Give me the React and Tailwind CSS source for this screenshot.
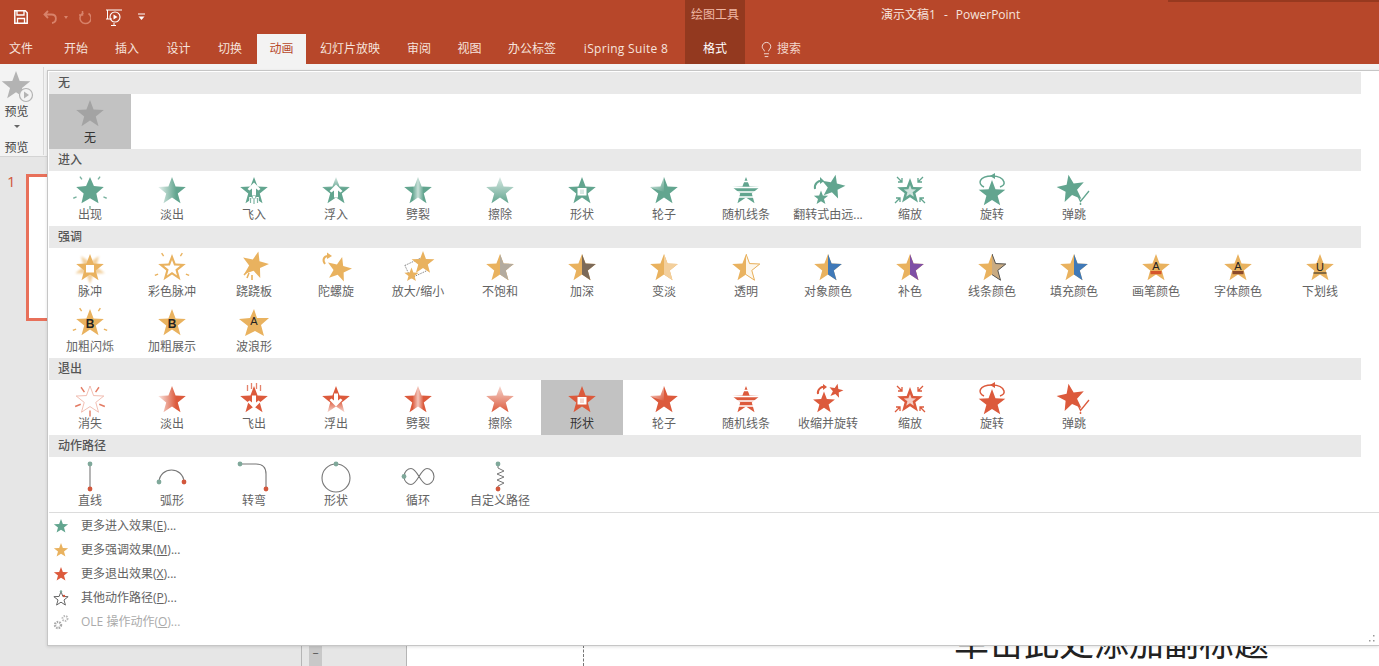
import React, { useId } from "react";
import { Lightbulb } from "lucide-react";

const GREEN = "#62a58f";
const GOLD = "#e9b25f";
const RED = "#dc5a3c";

function pts(cx, cy, r, rot = 0, ratio = 0.42) {
  const out = [];
  for (let i = 0; i < 10; i++) {
    const rad = i % 2 === 0 ? r : r * ratio;
    const a = ((-90 + rot + i * 36) * Math.PI) / 180;
    out.push(`${(cx + rad * Math.cos(a)).toFixed(2)},${(cy + rad * Math.sin(a)).toFixed(2)}`);
  }
  return out.join(" ");
}

function Rays({ angles, r1, r2, c, w = 1.4, cx = 16, cy = 17.5, op = 1 }) {
  return angles.map((d, i) => {
    const a = ((d - 90) * Math.PI) / 180;
    return (
      <line key={i} x1={cx + r1 * Math.cos(a)} y1={cy + r1 * Math.sin(a)} x2={cx + r2 * Math.cos(a)} y2={cy + r2 * Math.sin(a)} stroke={c} strokeWidth={w} opacity={op} />
    );
  });
}

function Half({ id, c, other, stroke }) {
  return (
    <>
      <defs>
        <clipPath id={id}>
          <rect x="16" y="0" width="16" height="32" />
        </clipPath>
      </defs>
      <polygon points={pts(16, 17.5, 14.5)} fill={GOLD} />
      <polygon points={pts(16, 17.5, 14.5)} fill={other} stroke={stroke} strokeWidth={stroke ? 1 : 0} clipPath={`url(#${id})`} />
    </>
  );
}

function Letter({ t, y = 21, bold, size = 11 }) {
  return (
    <text x="16" y={y} textAnchor="middle" fontSize={size} fontWeight={bold ? 700 : 400} fontFamily="'Liberation Sans',sans-serif" fill="#222">
      {t}
    </text>
  );
}

const UP = "M16 8.500l-6.500 6.500 2 1.500L14 14.500v7h4v-7l2.500 2 2-1.500z";
const DOWN = "M16 25.500l-6.500-6.500 2-1.500 2.500 2v-7h4v7l2.500-2 2 1.500z";

function Icon({ v, c = GREEN }) {
  const id = useId().replace(/[^a-zA-Z0-9]/g, "");
  const S = pts(16, 17.5, 14.5);
  const star = <polygon points={S} fill={c} />;
  const grad = (x1, y1, x2, y2, o1, o2, mid = 1) => (
    <defs>
      <linearGradient id={id} x1={x1} y1={y1} x2={x2} y2={y2}>
        <stop offset="0" stopColor={c} stopOpacity={o1} />
        <stop offset={mid} stopColor={c} stopOpacity={o2} />
      </linearGradient>
    </defs>
  );
  const gs = <polygon points={S} fill={`url(#${id})`} />;
  let body = null;
  switch (v) {
    case "none":
      body = <polygon points={S} fill="#a3a3a3" />;
      break;
    case "appear":
      body = (
        <>
          <polygon points={pts(16, 17.5, 14.5, 0, 0.46)} fill={c} />
          <Rays angles={[-34, 34, -112, 112, 180]} r1={14.5} r2={18} c={c} op={0.85} />
        </>
      );
      break;
    case "fade":
      body = (
        <>
          {grad(0, 0, 1, 0, 0.15, 1, 0.65)}
          {gs}
        </>
      );
      break;
    case "fly":
    case "flyOut":
      body = (
        <>
          {star}
          {v === "fly" ? (
            <>
              <path d={UP} fill="#fff" />
              <path d="M12.500 23v7M16 22v8M19.500 23v7" stroke="#fff" strokeWidth="2.600" />
              <path d="M12.500 24v5M16 24v6M19.500 24v5" stroke={c} strokeWidth="1.200" opacity=".8" />
            </>
          ) : (
            <>
              <path d={DOWN} fill="#fff" />
              <path d="M9.500 2v6M13.500 0v6M18.500 0v6M22.500 2v6" stroke={c} strokeWidth="1.300" opacity=".75" />
            </>
          )}
        </>
      );
      break;
    case "float":
    case "floatOut":
      body = (
        <>
          {v === "float" ? grad(0, 0, 0, 1, 0.25, 1, 0.45) : grad(0, 1, 0, 0, 0.25, 1, 0.45)}
          {gs}
          <path d={v === "float" ? UP : DOWN} fill="#fff" transform={v === "float" ? "translate(0,2)" : "translate(0,-2)"} />
        </>
      );
      break;
    case "split":
      body = (
        <>
          <defs>
            <linearGradient id={id} x1="0" y1="0" x2="1" y2="0">
              <stop offset="0.3" stopColor={c} />
              <stop offset="0.5" stopColor={c} stopOpacity=".35" />
              <stop offset="0.7" stopColor={c} />
            </linearGradient>
          </defs>
          {gs}
        </>
      );
      break;
    case "wipe":
      body = (
        <>
          {grad(0, 0, 0, 1, 0.25, 1)}
          {gs}
        </>
      );
      break;
    case "shape":
      body = (
        <>
          {star}
          <rect x="11.500" y="14" width="9" height="7.500" fill="#fff" />
          <rect x="14" y="15.500" width="4" height="4.500" fill={c} opacity=".25" />
        </>
      );
      break;
    case "wheel":
      body = (
        <>
          {star}
          <defs>
            <linearGradient id={id} x1="0" y1="0" x2="1" y2="1">
              <stop offset="0" stopColor="#fff" stopOpacity=".95" />
              <stop offset="1" stopColor="#fff" stopOpacity="0" />
            </linearGradient>
          </defs>
          <polygon points="16,3 16,18 1,13 10,12" fill={`url(#${id})`} />
        </>
      );
      break;
    case "bars":
      body = (
        <>
          {star}
          <path d="M0 7.500h32M0 13.500h32M0 18h32M0 23h32" stroke="#fff" strokeWidth="1.600" />
        </>
      );
      break;
    case "flip":
      body = (
        <>
          <polygon points={pts(21, 13, 12.500, 12)} fill={c} />
          <polygon points={pts(9, 24, 7.500)} fill={c} />
          <path d="M3 15c-1-5 3-9 8-8" fill="none" stroke={c} strokeWidth="2" />
          <path d="M8 3l4 4-4 3z" fill={c} />
        </>
      );
      break;
    case "shrink":
      body = (
        <>
          <polygon points={pts(12, 20, 11.500)} fill={c} />
          <polygon points={pts(24, 8, 7.500, 12)} fill={c} />
          <path d="M6 11c-1-4 3-8 7-7" fill="none" stroke={c} strokeWidth="2" />
          <path d="M11 1l4 3-4 3z" fill={c} />
        </>
      );
      break;
    case "zoom":
      body = (
        <>
          <polygon points={pts(16, 17.500, 13.500)} fill={c} />
          <polygon points={pts(16, 17.500, 6.500)} fill="#fff" opacity=".7" />
          <path d="M3 3l5 5M8 4v4H4M29 3l-5 5M24 4v4h4M1 29l5-5M6 28v-4H2M31 29l-5-5M26 28v-4h4" fill="none" stroke={c} strokeWidth="1.300" />
        </>
      );
      break;
    case "swivel":
      body = (
        <>
          <path d="M8 13C1 10 3 2 16 2c7 0 11 3 12 6 .5 2-1 4-4 5" fill="none" stroke={c} strokeWidth="1.500" />
          <polygon points={pts(16, 20, 14)} fill={c} />
          <path d="M19-1l-5 3 5 3z" fill={c} />
        </>
      );
      break;
    case "bounce":
      body = (
        <>
          <polygon points={pts(13, 15, 14.500, -10)} fill={c} />
          <path d="M19 20l3.500 7.500L31 17" fill="none" stroke={c} strokeWidth="1.300" />
          <circle cx="22.500" cy="30" r=".9" fill={c} />
        </>
      );
      break;
    case "vanish":
      body = (
        <>
          <polygon points={S} fill="#fff" stroke={c} strokeWidth=".6" opacity=".65" />
          <Rays angles={[-34, 34, -112, 112, 180]} r1={16} r2={10} c={c} op={0.8} />
        </>
      );
      break;
    case "pulse":
      body = (
        <>
          <defs>
            <filter id={id} x="-30%" y="-30%" width="160%" height="160%">
              <feGaussianBlur stdDeviation="1.300" />
            </filter>
          </defs>
          <polygon points={pts(16, 17.500, 15.500, 36)} fill={c} opacity=".6" filter={`url(#${id})`} />
          {star}
          <rect x="12" y="14" width="8" height="7.500" fill="#fff" />
        </>
      );
      break;
    case "colorPulse":
      body = (
        <>
          {star}
          <polygon points={pts(16, 17.500, 8.500)} fill="#fff" />
          <Rays angles={[-34, 34, -112, 112]} r1={15} r2={18.500} c={c} />
        </>
      );
      break;
    case "teeter":
      body = (
        <>
          <polygon points={pts(17, 14, 14, 14)} fill={c} />
          <path d="M9 27l2-5M14 29l0-5M6 24l3-3" stroke={c} strokeWidth="1.600" />
        </>
      );
      break;
    case "spin":
      body = (
        <>
          <polygon points={pts(19, 18.500, 13, 14)} fill={c} />
          <path d="M5 13c-3-4-1-8 3-8" fill="none" stroke={c} strokeWidth="2" />
          <path d="M7 1.500l5 3.500-5 3z" fill={c} />
        </>
      );
      break;
    case "grow":
      body = (
        <>
          <rect x="5" y="10" width="19" height="14" fill="none" stroke="#666" strokeWidth=".7" strokeDasharray="1.500 1" transform="rotate(-25 14 17)" />
          <polygon points={pts(21, 12, 12)} fill={c} />
          <polygon points={pts(9.500, 24, 7.500)} fill={c} />
        </>
      );
      break;
    case "desat":
      body = <Half id={id} other="#b3ab9f" />;
      break;
    case "darken":
      body = <Half id={id} other="#7b6a59" />;
      break;
    case "lighten":
      body = <Half id={id} other="#f3cf9c" />;
      break;
    case "transp":
      body = <Half id={id} other="#fdf6ea" stroke={GOLD} />;
      break;
    case "objColor":
    case "fillColor":
      body = <Half id={id} other="#3f79b8" />;
      break;
    case "comp":
      body = <Half id={id} other="#7f4fa6" />;
      break;
    case "lineColor":
      body = <Half id={id} other="#c9ab82" stroke="#555" />;
      break;
    case "brush":
      body = (
        <>
          {star}
          <Letter t="A" y={19} />
          <rect x="10.500" y="20" width="11" height="3.200" fill="#d5562c" />
        </>
      );
      break;
    case "font":
      body = (
        <>
          {star}
          <Letter t="A" y={19} />
          <rect x="10.500" y="20" width="11" height="3.200" fill="#8c4c2c" />
        </>
      );
      break;
    case "under":
      body = (
        <>
          {star}
          <Letter t="U" y={20} />
          <rect x="9.500" y="21.500" width="13" height="1" fill="#222" />
        </>
      );
      break;
    case "boldFlash":
      body = (
        <>
          {star}
          <Rays angles={[-34, 34, -112, 112]} r1={15} r2={18.500} c={c} />
          <Letter t="B" y={22} bold size={12} />
        </>
      );
      break;
    case "boldReveal":
      body = (
        <>
          {star}
          <Letter t="B" y={22} bold size={12} />
        </>
      );
      break;
    case "wave":
      body = (
        <>
          <path d="M16 3l3 9 12 0-8 7 3 11-9-5-10 5 3-10-9-7 11-1z" fill={c} />
          <Letter t="A" y={19} />
        </>
      );
      break;
    case "line":
      body = (
        <>
          <path d="M16 4v25" stroke="#777" strokeWidth="1.100" />
          <circle cx="16" cy="4" r="2.400" fill="#7fa89a" />
          <circle cx="16" cy="29" r="2.400" fill="#d2573c" />
        </>
      );
      break;
    case "arc":
      body = (
        <>
          <path d="M3 22c1-16 24-16 25 0" fill="none" stroke="#777" strokeWidth="1.100" />
          <circle cx="3" cy="22" r="2.400" fill="#7fa89a" />
          <circle cx="28" cy="22" r="2.400" fill="#d2573c" />
        </>
      );
      break;
    case "turn":
      body = (
        <>
          <path d="M2 4h16c7 0 10 3 10 10v15" fill="none" stroke="#777" strokeWidth="1.100" />
          <circle cx="2" cy="4" r="2.400" fill="#7fa89a" />
          <circle cx="28" cy="29" r="2.400" fill="#d2573c" />
        </>
      );
      break;
    case "circle":
      body = (
        <>
          <circle cx="16" cy="18" r="14" fill="none" stroke="#777" strokeWidth="1.100" />
          <circle cx="16" cy="4" r="2.400" fill="#7fa89a" />
        </>
      );
      break;
    case "loop":
      body = (
        <>
          <path d="M17 16.500c-3-5-5-8-8-8s-7 3-7 8 4 8 7 8 5-3 8-8 5-8 8-8 7 3 7 8-4 8-7 8-5-3-8-8z" fill="none" stroke="#777" strokeWidth="1.100" />
          <circle cx="2" cy="16.500" r="2.400" fill="#7fa89a" />
        </>
      );
      break;
    case "custom":
      body = (
        <>
          <path d="M14 4v4l6 3-7 3 7 3-7 3 7 3-6 3v3" fill="none" stroke="#777" strokeWidth="1" />
          <circle cx="14" cy="4" r="2.400" fill="#7fa89a" />
          <circle cx="14" cy="29" r="2.400" fill="#d2573c" />
        </>
      );
      break;
    default:
      body = star;
  }
  return (
    <svg width="32" height="32" viewBox="0 0 32 32" className="block shrink-0 overflow-visible">
      {body}
    </svg>
  );
}

function Item({ label, v, c, selected }) {
  return (
    <div className={selected ? "h-[55px] w-[82px] flex flex-col items-center pt-[3px] bg-[#c2c2c2] text-[#333]" : "h-[55px] w-[82px] flex flex-col items-center pt-[3px] text-[#636363]"}>
      <Icon v={v} c={c} />
      <span className="mt-[1px] h-[16px] text-[12px] leading-[16px] whitespace-nowrap">{label}</span>
    </div>
  );
}

function Section({ title, items, c }) {
  return (
    <section>
      <h3 className="h-[22px] w-[1312px] bg-[#e9e9e9] pl-[9px] text-[12px] leading-[22px] text-[#555] font-medium">{title}</h3>
      <div className="grid grid-cols-[repeat(16,82px)]">
        {items.map((it) => (
          <Item key={it[0]} label={it[0]} v={it[1]} c={c} selected={it[2]} />
        ))}
      </div>
    </section>
  );
}

const entrance = [["出现", "appear"], ["淡出", "fade"], ["飞入", "fly"], ["浮入", "float"], ["劈裂", "split"], ["擦除", "wipe"], ["形状", "shape"], ["轮子", "wheel"], ["随机线条", "bars"], ["翻转式由远...", "flip"], ["缩放", "zoom"], ["旋转", "swivel"], ["弹跳", "bounce"]];
const emphasis = [["脉冲", "pulse"], ["彩色脉冲", "colorPulse"], ["跷跷板", "teeter"], ["陀螺旋", "spin"], ["放大/缩小", "grow"], ["不饱和", "desat"], ["加深", "darken"], ["变淡", "lighten"], ["透明", "transp"], ["对象颜色", "objColor"], ["补色", "comp"], ["线条颜色", "lineColor"], ["填充颜色", "fillColor"], ["画笔颜色", "brush"], ["字体颜色", "font"], ["下划线", "under"], ["加粗闪烁", "boldFlash"], ["加粗展示", "boldReveal"], ["波浪形", "wave"]];
const exit = [["消失", "vanish"], ["淡出", "fade"], ["飞出", "flyOut"], ["浮出", "floatOut"], ["劈裂", "split"], ["擦除", "wipe"], ["形状", "shape", true], ["轮子", "wheel"], ["随机线条", "bars"], ["收缩并旋转", "shrink"], ["缩放", "zoom"], ["旋转", "swivel"], ["弹跳", "bounce"]];
const motion = [["直线", "line"], ["弧形", "arc"], ["转弯", "turn"], ["形状", "circle"], ["循环", "loop"], ["自定义路径", "custom"]];

const tabs = [
  ["文件", "w-[42px] mr-[9px]"],
  ["开始", "w-[50px]"],
  ["插入", "w-[52px]"],
  ["设计", "w-[51px]"],
  ["切换", "w-[52px] mr-[1px]"],
  ["动画", "w-[49px] bg-[#f3f3f3] text-[#b7472a]"],
  ["幻灯片放映", "w-[88px]"],
  ["审阅", "w-[50px]"],
  ["视图", "w-[51px]"],
  ["办公标签", "w-[74px]"],
  ["iSpring Suite 8", "w-[114px] mr-[2px] tracking-[0.3px]"],
  ["格式", "w-[60px] bg-[#93391f] text-white"],
];

function MenuIcon({ children }) {
  return (
    <svg width="16" height="16" viewBox="0 0 16 16" className="block">
      {children}
    </svg>
  );
}

function MenuRow({ icon, text, k, disabled }) {
  return (
    <div className={disabled ? "h-[24px] flex items-center pl-[4px] text-[12px] leading-[24px] text-[#aaa]" : "h-[24px] flex items-center pl-[4px] text-[12px] leading-[24px] text-[#636363]"}>
      <span className="w-[16px] h-[16px]">{icon}</span>
      <span className="ml-[12px] whitespace-nowrap">
        {text}(<span className="underline">{k}</span>)...
      </span>
    </div>
  );
}

export default function App() {
  return (
    <div className="relative w-[1379px] h-[666px] overflow-hidden bg-white font-['Open_Sans','Noto_Sans_CJK_SC',sans-serif]">
      <header className="h-[64px] bg-[#b7472a] text-[#f6e3dd] text-[12px]">
        <div className="h-[34px] flex">
          <div className="w-[685px] flex items-center pl-[14px]">
            <svg width="14" height="14" viewBox="0 0 14 14" className="block">
              <path d="M.8.8h10.500l1.900 1.900v10.500H.8z" fill="none" stroke="#fff" strokeWidth="1.500" />
              <path d="M3 1v4h7V1" fill="none" stroke="#fff" strokeWidth="1.300" />
              <path d="M3.500 13V8.500h7V13" fill="none" stroke="#fff" strokeWidth="1.300" />
            </svg>
            <svg width="15" height="14" viewBox="0 0 15 14" className="block ml-[15px]">
              <path d="M5 1L1.500 4.500 5 8M2 4.500h6.500c6 0 5.500 8 .5 8.500" fill="none" stroke="#d8826a" strokeWidth="1.800" />
            </svg>
            <span className="ml-[6px] w-0 h-0 border-x-[2.500px] border-x-transparent border-t-[3px] border-t-[#d8826a]" />
            <svg width="14" height="15" viewBox="0 0 14 15" className="block ml-[9px]">
              <path d="M10 3a5.500 5.500 0 1 1-5-.5M4 .5v4h-3.500" fill="none" stroke="#d8826a" strokeWidth="1.500" transform="translate(1.500,.5)" />
            </svg>
            <svg width="18" height="18" viewBox="0 0 18 18" className="block ml-[14px]">
              <path d="M1 2h16M2.500 2v9M1 11h6M9 15v2M6 17.500h5" fill="none" stroke="#fff" strokeWidth="1" />
              <circle cx="10" cy="9" r="5" fill="none" stroke="#fff" strokeWidth="1.100" />
              <path d="M8.500 6.500v5l4-2.500z" fill="#fff" />
            </svg>
            <svg width="7" height="8" viewBox="0 0 7 8" className="block ml-[15px]">
              <path d="M0 1h7" stroke="#fff" strokeWidth="1" />
              <path d="M.5 3.500h6L3.500 7z" fill="#fff" />
            </svg>
          </div>
          <div className="w-[60px] bg-[#93391f] text-center leading-[29px] text-[#efb6a4]">绘图工具</div>
          <div className="ml-[136px] leading-[29px] whitespace-nowrap text-[#f6e3dd]">
            演示文稿1<span className="mx-[8px]">-</span>PowerPoint
          </div>
        </div>
        <nav className="h-[30px] flex">
          {tabs.map((t) => (
            <div key={t[0]} className={`h-[30px] flex items-center justify-center whitespace-nowrap ${t[1]}`}>
              {t[0]}
            </div>
          ))}
          <div className="flex items-center ml-[13px]">
            <Lightbulb size={17} strokeWidth={1.1} color="#fff" />
            <span className="ml-[2px] text-[#f3d6cc]">搜索</span>
          </div>
        </nav>
      </header>

      <div className="h-[93px] bg-[#f3f3f3] border-b border-[#d4d4d4] flex">
        <div className="w-[44px] h-[88px] mt-[3px] pr-[10px] border-r border-[#d8d8d8] flex flex-col items-center text-[12px] text-[#444]">
          <svg width="34" height="36" viewBox="0 0 34 36" className="block shrink-0">
            <polygon points={pts(16, 19, 15)} fill="#b3b3b3" />
            <circle cx="26" cy="28" r="6.500" fill="#f3f3f3" stroke="#b3b3b3" strokeWidth="1.200" />
            <path d="M24 24.500v7l5-3.500z" fill="#b3b3b3" />
          </svg>
          <span className="leading-[16px] mt-[1px]">预览</span>
          <span className="mt-[5px] w-0 h-0 border-x-[3px] border-x-transparent border-t-[3px] border-t-[#666]" />
          <span className="leading-[16px] mt-[12px]">预览</span>
        </div>
      </div>

      <div className="h-[509px] flex">
        <aside className="w-[302px] bg-[#e6e6e6] border-r border-[#b5b5b5] pt-[17px] flex">
          <span className="w-[26px] pl-[7px] text-[15px] leading-[14px] text-[#d0573b]">1</span>
          <div className="w-[250px] h-[147px] border-[3px] border-[#e8705a] bg-white" />
        </aside>
        <div className="w-[105px] bg-[#e6e6e6] border-r border-[#b5b5b5] pl-[7px] pt-[488px]">
          <div className="w-[13px] h-[21px] bg-[#c8c8c8] text-center text-[11px] leading-[16px] text-[#444]">−</div>
        </div>
        <main className="relative flex-1 bg-white pl-[547px] pt-[463px]">
          <div className="absolute left-[176px] top-[488px] h-[21px] border-l border-dashed border-[#777]" />
          <div className="text-[35px] leading-[42px] whitespace-nowrap text-[#222] font-['Noto_Sans_CJK_SC',sans-serif]">单击此处添加副标题</div>
        </main>
      </div>

      <div className="absolute left-[1168px] top-0 w-[211px] h-[2px] bg-[#97391f]" />

      <div className="absolute left-[47px] top-[70px] right-0 h-[576px] bg-white border-l border-t border-b border-[#c6c6c6] pt-[1px] pl-[1px] shadow-[0_1px_3px_rgba(0,0,0,0.12)]">
        <section>
          <h3 className="h-[22px] w-[1312px] bg-[#e9e9e9] pl-[9px] text-[12px] leading-[22px] text-[#555] font-medium">无</h3>
          <Item label="无" v="none" selected />
        </section>
        <Section title="进入" items={entrance} c={GREEN} />
        <Section title="强调" items={emphasis} c={GOLD} />
        <Section title="退出" items={exit} c={RED} />
        <Section title="动作路径" items={motion} c={GREEN} />
        <div className="border-t border-[#dcdcdc] pt-[1px]">
          <MenuRow text="更多进入效果" k="E" icon={<MenuIcon><polygon points={pts(8, 8.500, 7.500)} fill={GREEN} /></MenuIcon>} />
          <MenuRow text="更多强调效果" k="M" icon={<MenuIcon><polygon points={pts(8, 8.500, 7.500)} fill={GOLD} /></MenuIcon>} />
          <MenuRow text="更多退出效果" k="X" icon={<MenuIcon><polygon points={pts(8, 8.500, 7.500)} fill={RED} /></MenuIcon>} />
          <MenuRow text="其他动作路径" k="P" icon={<MenuIcon><polygon points={pts(8, 9, 7.500)} fill="#fff" stroke="#666" strokeWidth="1" /><circle cx="8" cy="1.500" r="1.200" fill="#7fa89a" /><circle cx="11" cy="6" r="1.200" fill="#d2573c" /></MenuIcon>} />
          <MenuRow disabled text="OLE 操作动作" k="O" icon={<MenuIcon><circle cx="5" cy="11" r="3" fill="none" stroke="#a8a8a8" strokeWidth="2.400" strokeDasharray="1.500 1" /><circle cx="12" cy="4.500" r="2.500" fill="none" stroke="#bbb" strokeWidth="2" strokeDasharray="1.500 1" /></MenuIcon>} />
        </div>
        <svg width="8" height="8" viewBox="0 0 8 8" className="absolute right-[3px] bottom-[2px] block">
          <rect x="5" y="0" width="1.500" height="1.500" fill="#999" />
          <rect x="1" y="5" width="1.500" height="1.500" fill="#999" />
          <rect x="5" y="5" width="1.500" height="1.500" fill="#999" />
        </svg>
      </div>
    </div>
  );
}
